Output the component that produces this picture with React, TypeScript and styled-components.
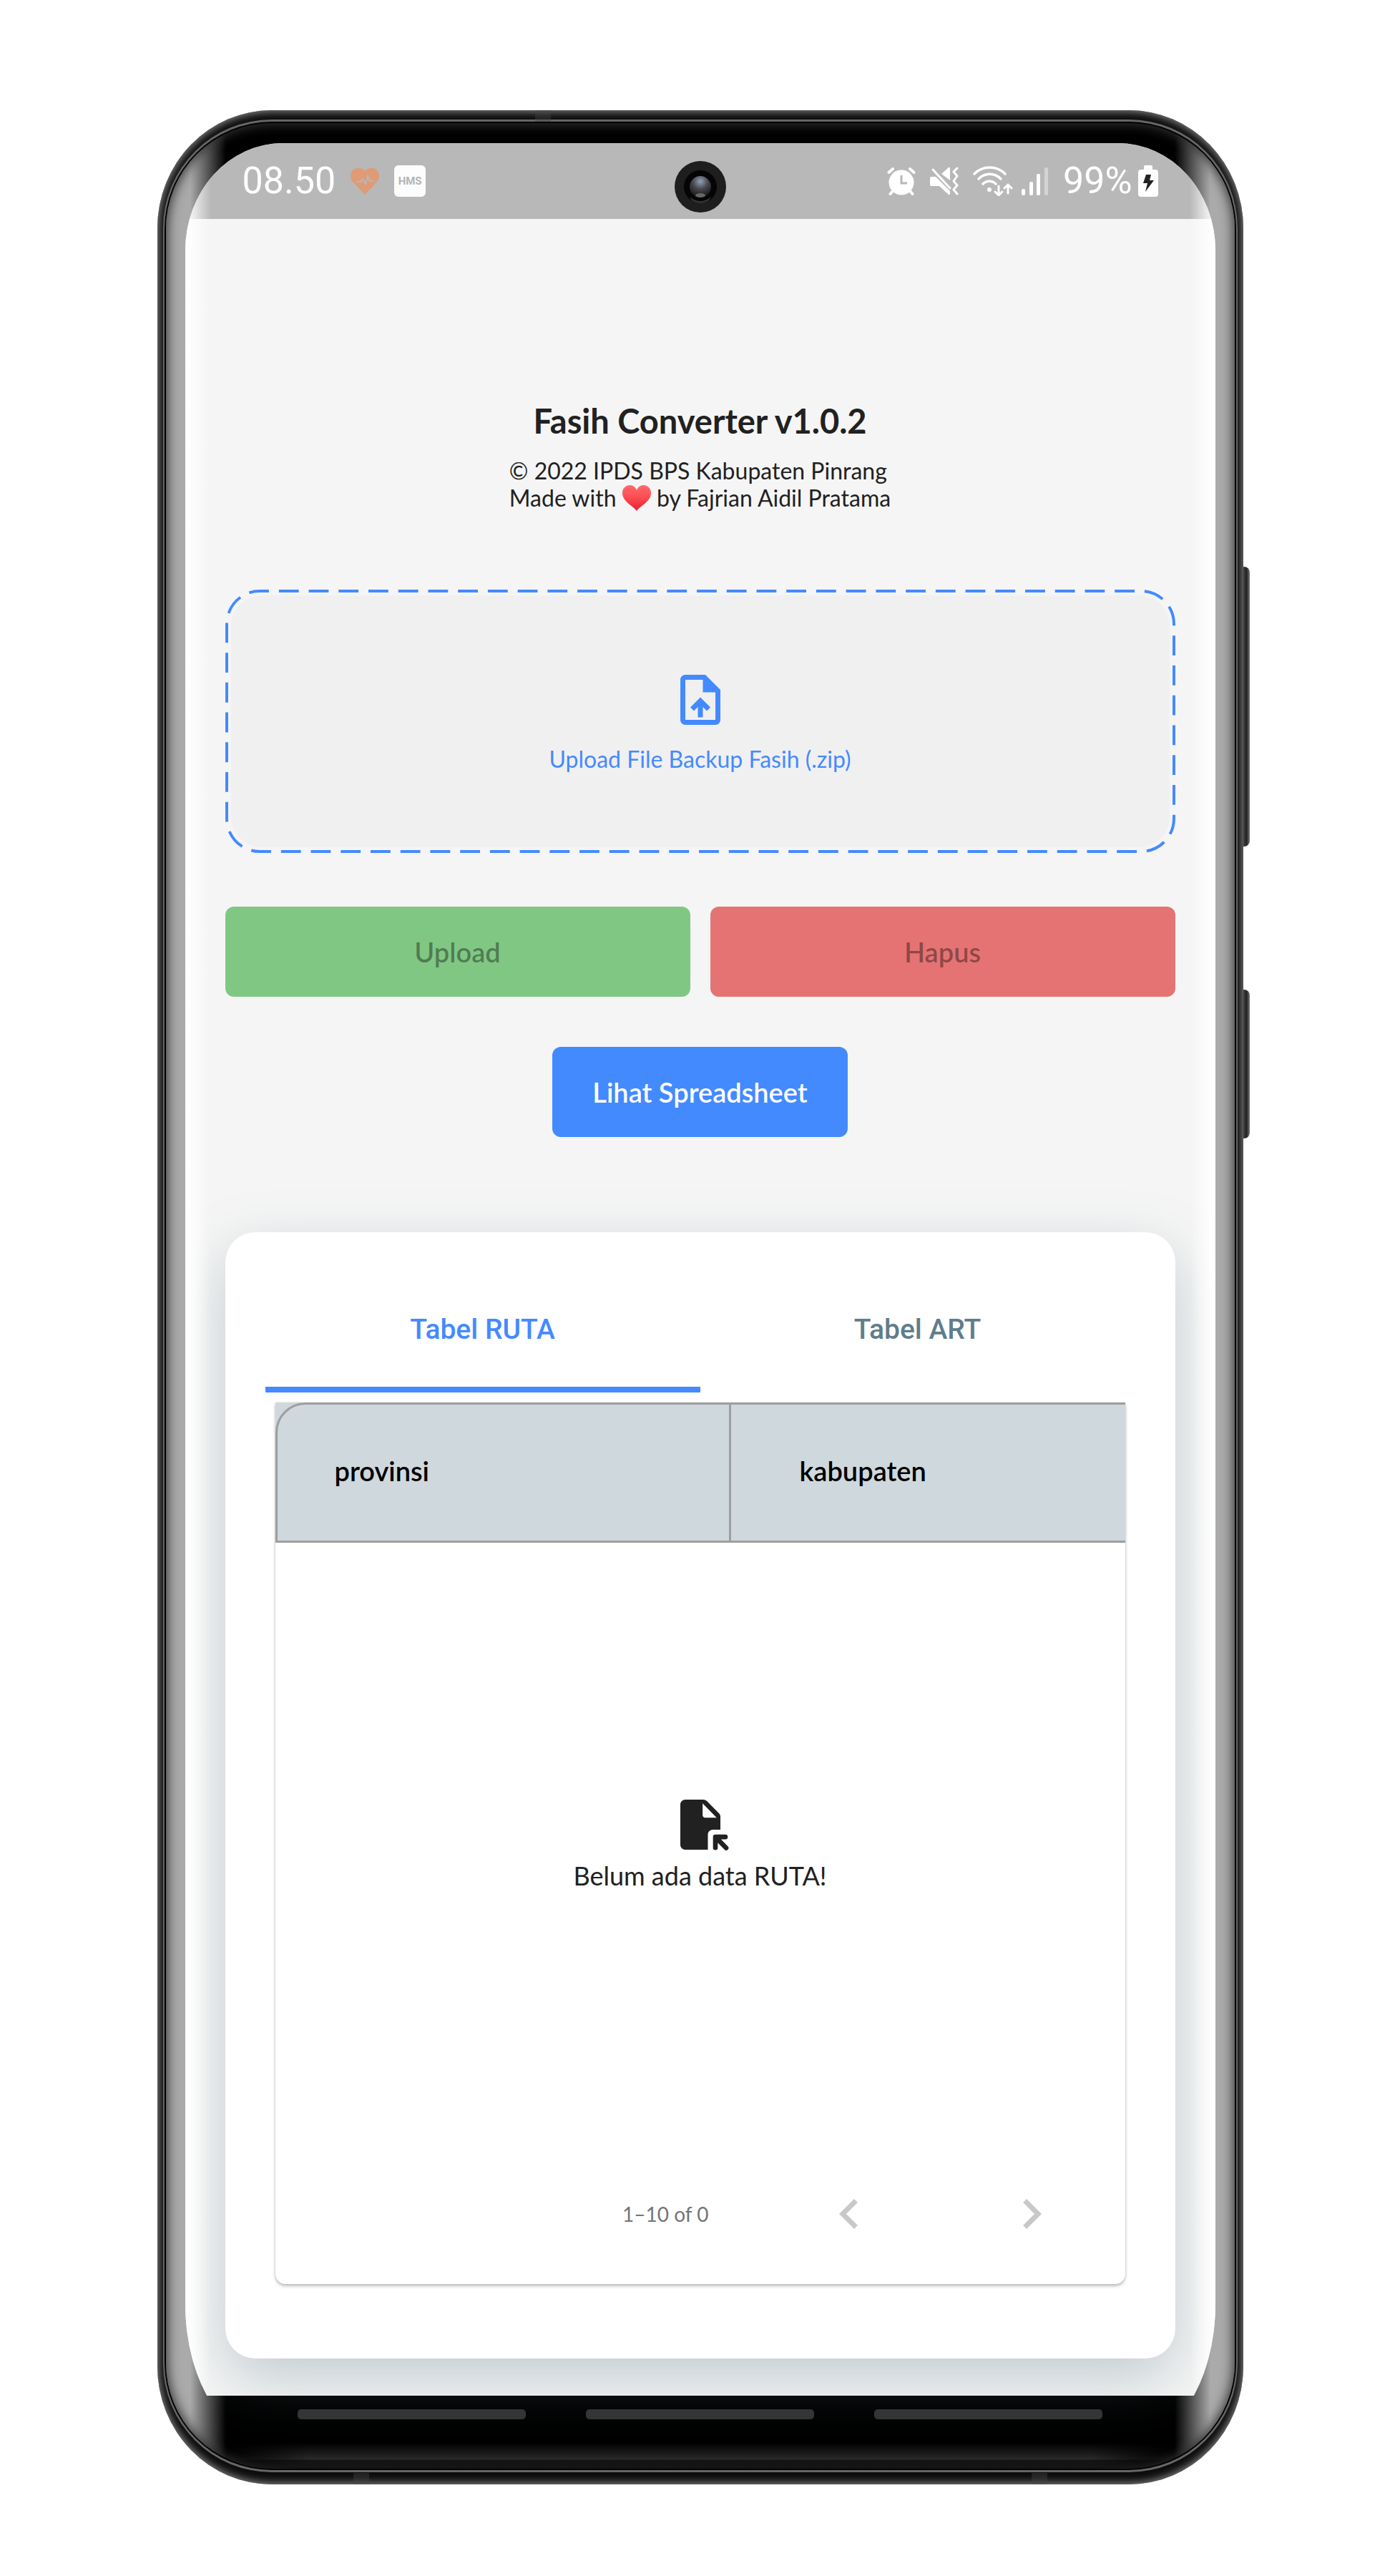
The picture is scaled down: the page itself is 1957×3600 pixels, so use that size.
import { useState } from "react";
import styled, { createGlobalStyle } from "styled-components";

const GlobalStyle = createGlobalStyle`
  *, *::before, *::after { box-sizing: border-box; }
  body {
    margin: 0;
    background: #fff;
    color: #212121;
    font-family: Lato, "Open Sans", sans-serif;
  }
  button { font-family: inherit; border: 0; cursor: pointer; }
`;

/* ---------- device ---------- */

const Page = styled.div`
  display: flex;
  justify-content: center;
  padding: 154px 48px 128px;
`;

const Device = styled.div`
  position: relative;
  width: 100%;
  max-width: 1518px;
`;

const Shell = styled.div`
  padding: 13px 8px 17px;
  border-radius: 160px / 165px;
  background: #0c0c0c;
  box-shadow: inset 0 0 12px 2px #8c8c8c;
`;

const Ring = styled.div`
  padding: 3px 2px;
  border-radius: 152px;
  background: #666;
`;

const Groove = styled.div`
  padding: 2px;
  border-radius: 150px;
  background: #000;
`;

const Bezel = styled.div`
  position: relative;
  overflow: hidden;
  padding: 28px 27px 30px;
  border-radius: 148px;
  background: linear-gradient(
    to right,
    #aaa 0, #aaa 34px, #000 84px,
    #000 calc(100% - 84px), #aaa calc(100% - 34px), #aaa 100%
  );
  box-shadow: inset 0 0 16px 2px #333;

  &::after {
    content: "";
    position: absolute;
    inset: auto 0 0;
    height: 36px;
    background: linear-gradient(to top, #151515 0, #141414 12px, #2a2a2a 13px, rgba(42, 42, 42, 0) 36px);
    mask-image: linear-gradient(
      to right,
      transparent 84px, #000 200px, #000 calc(100% - 200px), transparent calc(100% - 84px)
    );
  }
`;

const Screen = styled.div`
  position: relative;
  overflow: hidden;
  border-radius: 136px 136px 130px 130px / 150px 150px 200px 200px;
`;

const Display = styled.div`
  position: relative;
  background: #f5f5f5;

  &::after {
    content: "";
    position: absolute;
    inset: 0;
    pointer-events: none;
    background: linear-gradient(
      to right,
      #fff 0, rgba(255, 255, 255, 0.7) 12px, rgba(255, 255, 255, 0) 36px,
      rgba(255, 255, 255, 0) calc(100% - 36px), rgba(255, 255, 255, 0.7) calc(100% - 12px), #fff 100%
    );
  }
`;

const SideKey = styled.span<{ $top: number; $height: number }>`
  position: absolute;
  left: 100%;
  top: ${(p) => p.$top}px;
  width: 9px;
  height: ${(p) => p.$height}px;
  border-radius: 0 8px 8px 0;
  background: linear-gradient(to right, #444 0, #222 50%, #777 100%);
`;

const Antenna = styled.span<{ $left: string; $edge: "top" | "bottom" }>`
  position: absolute;
  left: ${(p) => p.$left};
  ${(p) => p.$edge}: 0;
  width: 22px;
  height: 16px;
  background: rgba(70, 70, 70, 0.4);
`;

const Camera = styled.svg`
  position: absolute;
  left: calc(50% - 36px);
  top: 25px;
  width: 72px;
  height: 72px;
`;

const NavBar = styled.nav`
  display: flex;
  justify-content: center;
  gap: 84px;
  height: 72px;
  padding: 19px 157px 0;
`;

const NavKey = styled.button`
  flex: 1;
  height: 14px;
  padding: 0;
  border-radius: 5px;
  background: #333;
`;

/* ---------- status bar ---------- */

const StatusBar = styled.header`
  display: flex;
  justify-content: space-between;
  align-items: center;
  height: 106px;
  padding: 0 80px;
  background: #b8b8b8;
  color: #fff;
  font-family: Roboto, sans-serif;
  font-size: 52px;
  line-height: 60px;
`;

const StatusGroup = styled.div<{ $gap: number }>`
  display: flex;
  align-items: center;
  gap: ${(p) => p.$gap}px;
`;

const HmsBadge = styled.span`
  display: flex;
  align-items: center;
  justify-content: center;
  width: 44px;
  height: 44px;
  border-radius: 6px;
  background: #fcfcfc;
  color: #b4b4b4;
  font-size: 15px;
  font-weight: 700;
`;

/* ---------- app ---------- */

const Main = styled.main`
  display: flex;
  flex-direction: column;
  align-items: center;
  padding: 254px 56px 52px;
`;

const Title = styled.h1`
  margin: 0;
  font-size: 47px;
  font-weight: 700;
  line-height: 56px;
`;

const Credits = styled.p`
  margin: 23px 0 109px;
  font-size: 32px;
  line-height: 38px;
`;

const HeartEmoji = styled.svg`
  width: 40px;
  height: 36px;
  vertical-align: -6px;
`;

const DropZone = styled.label`
  position: relative;
  display: flex;
  width: 100%;
  padding: 8px;
  color: #448aff;
  font-size: 32px;
  line-height: 38px;
  cursor: pointer;
`;

const DropFill = styled.span`
  display: flex;
  flex: 1;
  flex-direction: column;
  align-items: center;
  justify-content: center;
  gap: 22px;
  height: 352px;
  border-radius: 42px;
  background: #f0f0f0;
`;

const DropOutline = styled.svg`
  position: absolute;
  inset: 0;
  width: 100%;
  height: 100%;
  overflow: visible;
`;

const FileInput = styled.input`
  position: absolute;
  inset: 0;
  width: 100%;
  height: 100%;
  opacity: 0;
`;

const ButtonRow = styled.div`
  display: flex;
  gap: 28px;
  width: 100%;
  margin: 75px 0 70px;
`;

const Button = styled.button<{ $bg: string; $wide?: boolean }>`
  flex: ${(p) => (p.$wide ? "1" : "none")};
  height: 126px;
  padding: 0 56px;
  border-radius: 12px;
  background: ${(p) => p.$bg};
  color: #fff;
  font-size: 38px;
  font-weight: 600;
  line-height: 46px;

  &:disabled {
    color: rgba(0, 0, 0, 0.38);
    cursor: default;
  }
`;

const Card = styled.section`
  width: 100%;
  margin-top: 133px;
  padding: 56px 56px 104px;
  border-radius: 42px;
  background: #fff;
  box-shadow: 0 28px 80px rgba(96, 125, 139, 0.34);
`;

const Tabs = styled.div`
  display: flex;
`;

const Tab = styled.button`
  flex: 1;
  height: 168px;
  padding: 0;
  border-bottom: 8px solid transparent;
  background: none;
  color: #607d8b;
  font-family: Roboto, sans-serif;
  font-size: 39px;
  font-weight: 500;
  line-height: 48px;

  &[aria-selected="true"] {
    border-color: #448aff;
    color: #448aff;
  }
`;

const TablePanel = styled.div`
  margin: 14px 14px 0;
  border-radius: 0 0 14px 14px;
  background: #fff;
  box-shadow: 0 3px 4px rgba(0, 0, 0, 0.24), 0 0 3px rgba(0, 0, 0, 0.12);
`;

const TableScroll = styled.div`
  overflow: hidden;
  background: #cfd8dd;
`;

const Table = styled.table`
  width: 1274px;
  table-layout: fixed;
  border-collapse: separate;
  border-spacing: 0;
  border: 3px solid #9e9e9e;
  border-radius: 42px 0 0 0;
`;

const HeadCell = styled.th`
  height: 190px;
  padding: 0 96px 6px;
  color: #000;
  font-size: 38px;
  font-weight: 600;
  line-height: 46px;
  text-align: left;

  &:first-child {
    padding-left: 80px;
    border-right: 3px solid #9e9e9e;
  }
`;

const Empty = styled.div`
  display: flex;
  flex-direction: column;
  align-items: center;
  justify-content: center;
  gap: 6px;
  height: 840px;
  font-size: 36px;
  line-height: 46px;
`;

const Pager = styled.div`
  display: flex;
  align-items: center;
  justify-content: flex-end;
  height: 196px;
  padding-right: 89px;
  color: #757575;
  font-size: 28px;
  line-height: 38px;
`;

const PageButton = styled.button`
  display: flex;
  padding: 0;
  background: none;
  color: #c8c8c8;
  margin-left: 154px;

  & + & { margin-left: 171px; }
`;

/* ---------- icons ---------- */

const Glyph = ({ d, size = 84 }: { d: string; size?: number }) => (
  <svg width={size} height={size} viewBox="0 0 24 24" fill="currentColor" aria-hidden="true">
    <path d={d} />
  </svg>
);

const UPLOAD_FILE =
  "M14 2H6c-1.1 0-1.99.9-1.99 2L4 20c0 1.1.89 2 1.99 2H18c1.1 0 2-.9 2-2V8l-6-6zm4 18H6V4h7v5h5v11zM8 15.01l1.41 1.41L11 14.84V19h2v-4.16l1.59 1.59L16 15.01 12.01 11 8 15.01z";
const CHEVRON_LEFT = "M15.41 7.41 14 6l-6 6 6 6 1.41-1.41L10.83 12z";
const CHEVRON_RIGHT = "M10 6 8.59 7.41 13.17 12l-4.58 4.59L10 18l6-6z";

const FileArrowIcon = () => (
  <svg width="84" height="84" viewBox="0 0 24 24" aria-hidden="true">
    <path
      fill="#212121"
      fillRule="evenodd"
      d="M6 2h7.2c.5 0 1 .2 1.4.6l4.8 4.8c.4.4.6.9.6 1.4V14h-3c-1.1 0-2 .9-2 2v6H6c-1.1 0-2-.9-2-2V4c0-1.1.9-2 2-2zm6.9 1.5V8.2c0 .55.45 1 1 1h4.6z"
    />
    <path
      d="M22 16.9h-4v4.3M18.2 17.1l4.1 4.2"
      fill="none"
      stroke="#212121"
      strokeWidth="1.9"
      strokeLinecap="round"
      strokeLinejoin="round"
    />
  </svg>
);

const HealthIcon = () => (
  <svg width="40" height="38" viewBox="0 0 40 38" aria-hidden="true">
    <path
      fill="#df9b75"
      d="M20 38 3 20C-1 15-1 8 3 4c5-5 12-4 17 1 5-5 12-6 17-1 4 4 4 11 0 16z"
    />
    <path d="M8 20h6l3-4 4 7 3-11 3 7h5" fill="none" stroke="#b8b8b8" strokeWidth="2" />
  </svg>
);

const AlarmIcon = () => (
  <svg width="40" height="40" viewBox="0 0 40 40" aria-hidden="true">
    <g stroke="#fff" strokeWidth="4" strokeLinecap="round">
      <path d="M2.5 8 8 3M37.5 8 32 3M8 34l-3.5 4M32 34l3.5 4" />
    </g>
    <circle cx="20" cy="22" r="17.5" fill="#fff" />
    <path d="M20 12v11h8" fill="none" stroke="#b8b8b8" strokeWidth="3" />
  </svg>
);

const MuteIcon = () => (
  <svg width="40" height="40" viewBox="0 0 40 40" aria-hidden="true">
    <path fill="#fff" d="M0 16q0-2 2-2h6l20 20v5h-2L13 27H2q-2 0-2-2zM16 10 26 1h2v18z" />
    <path d="M4 4l24 26" stroke="#fff" strokeWidth="3" strokeLinecap="round" />
    <path
      d="M38 2l-5 5 5 6-5 7 5 6-5 6 5 6"
      fill="none"
      stroke="#fff"
      strokeWidth="3"
      strokeLinecap="round"
      strokeLinejoin="round"
    />
  </svg>
);

const WifiIcon = () => (
  <svg width="56" height="42" viewBox="0 0 56 42" aria-hidden="true">
    <g fill="none" stroke="#fff" strokeWidth="3.5" strokeLinecap="round">
      <path d="M2 11C14-1 33-1 45 11" />
      <path d="M8 18c9-9 22-9 31 0" />
      <path d="M14 25c5-5 13-5 18 0" />
      <path strokeWidth="3" d="M36 28v12M31 36l5 5 5-5M49 38V26M44 31l5-5 5 5" />
    </g>
    <circle cx="23" cy="33" r="3" fill="#fff" />
  </svg>
);

const SignalIcon = () => (
  <svg width="38" height="42" viewBox="0 0 38 42" aria-hidden="true">
    <g fill="#fff">
      <rect y="32" width="5" height="9" rx="2" />
      <rect x="11" y="22" width="5" height="19" rx="2" />
      <rect x="21" y="11" width="5" height="30" rx="2" />
      <rect x="32" y="2" width="5" height="39" rx="2" opacity="0.4" />
    </g>
  </svg>
);

const BatteryIcon = () => (
  <svg width="28" height="44" viewBox="0 0 28 44" aria-hidden="true">
    <path fill="#fff" d="M8 2q0-2 2-2h8q2 0 2 2v4h4q4 0 4 4v30q0 4-4 4H4q-4 0-4-4V10q0-4 4-4h4z" />
    <path fill="#222" d="M11 13h7l-2 8h6L10 37l3-12H7z" />
  </svg>
);

const CameraLens = () => (
  <Camera viewBox="0 0 72 72" aria-hidden="true">
    <defs>
      <radialGradient id="lens" cx="0.5" cy="0.25" r="0.7">
        <stop offset="0" stopColor="#8fa3b5" />
        <stop offset="0.5" stopColor="#4a4850" />
        <stop offset="1" stopColor="#1c1c1e" />
      </radialGradient>
    </defs>
    <circle cx="36" cy="36" r="36" fill="#1e1e1e" />
    <circle cx="36" cy="36" r="23" fill="#050507" />
    <path d="M21 50q15 12 30 0l-3 5q-12 8-24 0z" fill="#333" />
    <circle cx="36" cy="36" r="15" fill="url(#lens)" />
    <ellipse cx="36" cy="48" rx="7" ry="3" fill="#666" />
  </Camera>
);

const Heart = () => (
  <HeartEmoji viewBox="0 0 40 36" role="img" aria-label="love">
    <defs>
      <linearGradient id="heart" x1="0" y1="0" x2="0" y2="1">
        <stop offset="0" stopColor="#ff6b6b" />
        <stop offset="0.5" stopColor="#fb4a50" />
        <stop offset="1" stopColor="#e8202c" />
      </linearGradient>
    </defs>
    <path
      fill="url(#heart)"
      d="M20 36C14 28 0 23 0 11 0 4 5 0 10.500 0 15 0 18.500 3 20 7 21.500 3 25 0 29.500 0 35 0 40 4 40 11c0 12-14 17-20 25z"
    />
  </HeartEmoji>
);

/* ---------- screen ---------- */

const TABS = ["RUTA", "ART"];
const COLUMNS = ["provinsi", "kabupaten"];

export default function App() {
  const [tab, setTab] = useState("RUTA");

  return (
    <Page>
      <GlobalStyle />
      <Device>
        <Shell>
          <Ring>
            <Groove>
              <Bezel>
                <Screen>
                  <Display>
                    <StatusBar>
                      <StatusGroup $gap={21}>
                        <span>08.50</span>
                        <HealthIcon />
                        <HmsBadge>HMS</HmsBadge>
                      </StatusGroup>
                      <StatusGroup $gap={20}>
                        <AlarmIcon />
                        <MuteIcon />
                        <StatusGroup $gap={12}>
                          <WifiIcon />
                          <SignalIcon />
                        </StatusGroup>
                        <StatusGroup $gap={8}>
                          <span>99%</span>
                          <BatteryIcon />
                        </StatusGroup>
                      </StatusGroup>
                    </StatusBar>

                    <Main>
                      <Title>Fasih Converter v1.0.2</Title>
                      <Credits>
                        © 2022 IPDS BPS Kabupaten Pinrang
                        <br />
                        Made with <Heart /> by Fajrian Aidil Pratama
                      </Credits>

                      <DropZone>
                        <FileInput type="file" accept=".zip" />
                        <DropFill>
                          <Glyph d={UPLOAD_FILE} />
                          <span>Upload File Backup Fasih (.zip)</span>
                        </DropFill>
                        <DropOutline aria-hidden="true">
                          <rect
                            x="2"
                            y="2"
                            rx="46"
                            pathLength="3318"
                            fill="none"
                            stroke="#448aff"
                            strokeWidth="4"
                            strokeDasharray="28 14"
                            strokeDashoffset="15"
                            style={{ width: "calc(100% - 4px)", height: "calc(100% - 4px)" }}
                          />
                        </DropOutline>
                      </DropZone>

                      <ButtonRow>
                        <Button $wide $bg="#81c784" disabled>Upload</Button>
                        <Button $wide $bg="#e57373" disabled>Hapus</Button>
                      </ButtonRow>
                      <Button $bg="#448aff">Lihat Spreadsheet</Button>

                      <Card>
                        <Tabs role="tablist">
                          {TABS.map((name) => (
                            <Tab
                              key={name}
                              role="tab"
                              aria-selected={tab === name}
                              onClick={() => setTab(name)}
                            >
                              Tabel {name}
                            </Tab>
                          ))}
                        </Tabs>
                        <TablePanel>
                          <TableScroll>
                            <Table>
                              <thead>
                                <tr>
                                  {COLUMNS.map((name) => (
                                    <HeadCell key={name} scope="col">{name}</HeadCell>
                                  ))}
                                </tr>
                              </thead>
                            </Table>
                          </TableScroll>
                          <Empty>
                            <FileArrowIcon />
                            <span>Belum ada data {tab}!</span>
                          </Empty>
                          <Pager>
                            <span>1–10 of 0</span>
                            <PageButton aria-label="Previous page" disabled>
                              <Glyph d={CHEVRON_LEFT} />
                            </PageButton>
                            <PageButton aria-label="Next page" disabled>
                              <Glyph d={CHEVRON_RIGHT} />
                            </PageButton>
                          </Pager>
                        </TablePanel>
                      </Card>
                    </Main>
                  </Display>
                  <CameraLens />
                  <NavBar>
                    <NavKey aria-label="Recent apps" />
                    <NavKey aria-label="Home" />
                    <NavKey aria-label="Back" />
                  </NavBar>
                </Screen>
              </Bezel>
            </Groove>
          </Ring>
        </Shell>
        <SideKey $top={638} $height={391} />
        <SideKey $top={1229} $height={208} />
        <Antenna $left="528px" $edge="top" />
        <Antenna $left="274px" $edge="bottom" />
        <Antenna $left="1222px" $edge="bottom" />
      </Device>
    </Page>
  );
}
